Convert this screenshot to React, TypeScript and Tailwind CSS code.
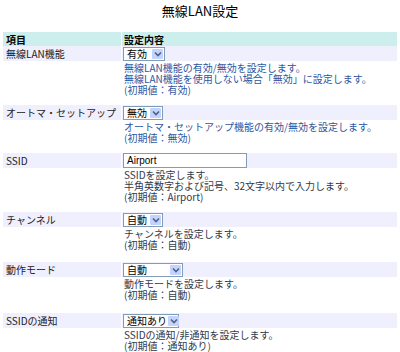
import React from "react";

type Item = {
  label: string;
  control: React.ReactNode;
  lines: string[];
  tone?: "blue" | "dark";
  gap: string;
};

const jp = { fontFamily: '"Noto Sans CJK JP", "Noto Sans", sans-serif' };

function Chevron() {
  return (
    <svg width="8" height="6" viewBox="0 0 8 6" fill="none">
      <path d="M1 1.5 L4 4.5 L7 1.5" stroke="#4d6185" strokeWidth="1.6" />
    </svg>
  );
}

// looks like an old XP-style dropdown
function FakeSelect({ value, width }: { value: string; width: number }) {
  return (
    <div
      className="flex h-[14px] items-stretch border border-[#7f9db9] bg-white"
      style={{ width }}
    >
      <span className="flex flex-1 items-center whitespace-nowrap pl-[3px] text-[10px] leading-none text-black">
        {value}
      </span>
      <span className="m-px flex w-[11px] shrink-0 items-center justify-center rounded-[1px] bg-[#c3d3fd]">
        <Chevron />
      </span>
    </div>
  );
}

const items: Item[] = [
  {
    label: "無線LAN機能",
    control: <FakeSelect value="有効" width={42} />,
    lines: [
      "無線LAN機能の有効/無効を設定します。",
      "無線LAN機能を使用しない場合「無効」に設定します。",
      "(初期値：有効)",
    ],
    tone: "blue",
    gap: "h-[9px]",
  },
  {
    label: "オートマ・セットアップ",
    control: <FakeSelect value="無効" width={40} />,
    lines: ["オートマ・セットアップ機能の有効/無効を設定します。", "(初期値：無効)"],
    tone: "blue",
    gap: "h-[9px]",
  },
  {
    label: "SSID",
    control: (
      <div
        className="flex h-[15px] w-[124px] items-center border border-[#7f9db9] bg-white pl-[3px] text-[10px] text-black"
        style={{ fontFamily: '"Liberation Sans", sans-serif' }}
      >
        Airport
      </div>
    ),
    lines: [
      "SSIDを設定します。",
      "半角英数字および記号、32文字以内で入力します。",
      "(初期値：Airport)",
    ],
    gap: "h-[9px]",
  },
  {
    label: "チャンネル",
    control: <FakeSelect value="自動" width={40} />,
    lines: ["チャンネルを設定します。", "(初期値：自動)"],
    gap: "h-[11px]",
  },
  {
    label: "動作モード",
    control: <FakeSelect value="自動" width={60} />,
    lines: ["動作モードを設定します。", "(初期値：自動)"],
    gap: "h-[12px]",
  },
  {
    label: "SSIDの通知",
    control: <FakeSelect value="通知あり" width={56} />,
    lines: ["SSIDの通知/非通知を設定します。", "(初期値：通知あり)"],
    gap: "h-[9px]",
  },
];

export default function App() {
  return (
    <div className="h-[352px] w-[400px] overflow-hidden bg-white text-[#222]" style={jp}>
      <h1 className="pt-[4px] text-center text-[13px] leading-[14px] font-normal text-black">
        無線LAN設定
      </h1>

      <div className="mt-[14px] px-[3px]">
        {/* header */}
        <div className="grid h-[13px] grid-cols-[118px_1fr] gap-x-px">
          <div className="flex items-center bg-[#ccefee] pl-[3px] text-[10px] font-bold text-black">項目</div>
          <div className="flex items-center bg-[#ccefee] pl-[2px] text-[10px] font-bold text-black">設定内容</div>
        </div>

        {items.map((it) => (
          <div key={it.label} className="mt-px">
            <div className="grid h-[15px] grid-cols-[118px_1fr] gap-x-px">
              <div className="flex items-center whitespace-nowrap bg-[#efeffd] pl-[3px] text-[10px] leading-none">
                {it.label}
              </div>
              <div className="flex items-center bg-[#efeffd] pl-px">{it.control}</div>
            </div>
            <div className="grid grid-cols-[118px_1fr] gap-x-px">
              <div />
              <div
                className={`pt-[1px] pl-[2px] text-[10px] leading-[11px] ${
                  it.tone === "blue" ? "text-[#2f56a0]" : "text-[#333a4a]"
                }`}
              >
                {it.lines.map((l) => (
                  <div key={l}>{l}</div>
                ))}
              </div>
            </div>
            <div className={it.gap} />
          </div>
        ))}
      </div>
    </div>
  );
}
